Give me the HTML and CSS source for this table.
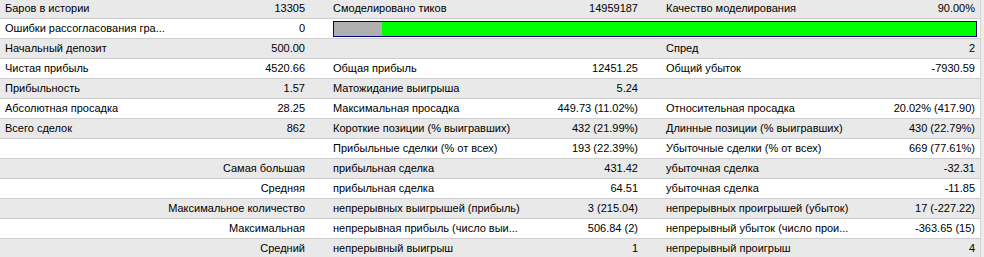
FILE: index.html
```html
<!DOCTYPE html>
<html lang="ru">
<head>
<meta charset="utf-8">
<title>Отчёт тестера</title>
<link rel="stylesheet" href="styles.css">
</head>
<body>
<div class="report">
  <div class="row g">
    <div class="c l">Баров в истории</div><div class="c v">13305</div>
    <div class="c l2">Смоделировано тиков</div><div class="c v">14959187</div>
    <div class="c l2">Качество моделирования</div><div class="c v">90.00%</div>
  </div>
  <div class="row w">
    <div class="c l">Ошибки рассогласования гра...</div><div class="c v">0</div>
    <div class="c barcell"><div class="bar"><div class="bar-gray"></div><div class="bar-green"></div></div></div>
  </div>
  <div class="row g">
    <div class="c l">Начальный депозит</div><div class="c v">500.00</div>
    <div class="c l2"></div><div class="c v"></div>
    <div class="c l2">Спред</div><div class="c v">2</div>
  </div>
  <div class="row w">
    <div class="c l">Чистая прибыль</div><div class="c v">4520.66</div>
    <div class="c l2">Общая прибыль</div><div class="c v">12451.25</div>
    <div class="c l2">Общий убыток</div><div class="c v">-7930.59</div>
  </div>
  <div class="row g">
    <div class="c l">Прибыльность</div><div class="c v">1.57</div>
    <div class="c l2">Матожидание выигрыша</div><div class="c v">5.24</div>
    <div class="c l2"></div><div class="c v"></div>
  </div>
  <div class="row w">
    <div class="c l">Абсолютная просадка</div><div class="c v">28.25</div>
    <div class="c l2">Максимальная просадка</div><div class="c v">449.73 (11.02%)</div>
    <div class="c l2">Относительная просадка</div><div class="c v">20.02% (417.90)</div>
  </div>
  <div class="row g">
    <div class="c l">Всего сделок</div><div class="c v">862</div>
    <div class="c l2">Короткие позиции (% выигравших)</div><div class="c v">432 (21.99%)</div>
    <div class="c l2">Длинные позиции (% выигравших)</div><div class="c v">430 (22.79%)</div>
  </div>
  <div class="row w">
    <div class="c l"></div><div class="c v"></div>
    <div class="c l2">Прибыльные сделки (% от всех)</div><div class="c v">193 (22.39%)</div>
    <div class="c l2">Убыточные сделки (% от всех)</div><div class="c v">669 (77.61%)</div>
  </div>
  <div class="row g">
    <div class="c head">Самая большая</div>
    <div class="c l2">прибыльная сделка</div><div class="c v">431.42</div>
    <div class="c l2">убыточная сделка</div><div class="c v">-32.31</div>
  </div>
  <div class="row w">
    <div class="c head">Средняя</div>
    <div class="c l2">прибыльная сделка</div><div class="c v">64.51</div>
    <div class="c l2">убыточная сделка</div><div class="c v">-11.85</div>
  </div>
  <div class="row g">
    <div class="c head">Максимальное количество</div>
    <div class="c l2">непрерывных выигрышей (прибыль)</div><div class="c v">3 (215.04)</div>
    <div class="c l2">непрерывных проигрышей (убыток)</div><div class="c v">17 (-227.22)</div>
  </div>
  <div class="row w">
    <div class="c head">Максимальная</div>
    <div class="c l2">непрерывная прибыль (число выи...</div><div class="c v">506.84 (2)</div>
    <div class="c l2">непрерывный убыток (число прои...</div><div class="c v">-363.65 (15)</div>
  </div>
  <div class="row g">
    <div class="c head">Средний</div>
    <div class="c l2">непрерывный выигрыш</div><div class="c v">1</div>
    <div class="c l2">непрерывный проигрыш</div><div class="c v">4</div>
  </div>
</div>
</body>
</html>
```
FILE: styles.css
```css
html, body {
  margin: 0;
  padding: 0;
  background: #ececec;
}
body {
  font-family: "Liberation Sans", Arial, sans-serif;
  font-size: 11px;
  color: #000;
  overflow: hidden;
}
.report {
  width: 980px;
  margin-top: -1px;
  border-right: 1px solid #d4d4d4;
}
.row {
  display: grid;
  grid-template-columns: 170px 140px 215px 118px 214px 123px;
  height: 19px;
  border-bottom: 1px solid #cdcdcd;
}
.row.g { background: #e9e9e9; }
.row.w { background: #ffffff; }
.c {
  line-height: 19px;
  white-space: nowrap;
  overflow: hidden;
}
.l { padding-left: 5px; }
.l2 { padding-left: 23px; }
.v { text-align: right; padding-right: 5px; }
.head {
  grid-column: 1 / 3;
  text-align: right;
  padding-right: 5px;
}
.barcell {
  grid-column: 3 / 7;
  padding: 2px 3px 0 23px;
}
.bar {
  display: flex;
  height: 14px;
  border: 1px solid #000080;
}
.bar-gray { width: 48px; background: #b0b0b0; }
.bar-green { flex: 1; background: #00ff00; }
```
